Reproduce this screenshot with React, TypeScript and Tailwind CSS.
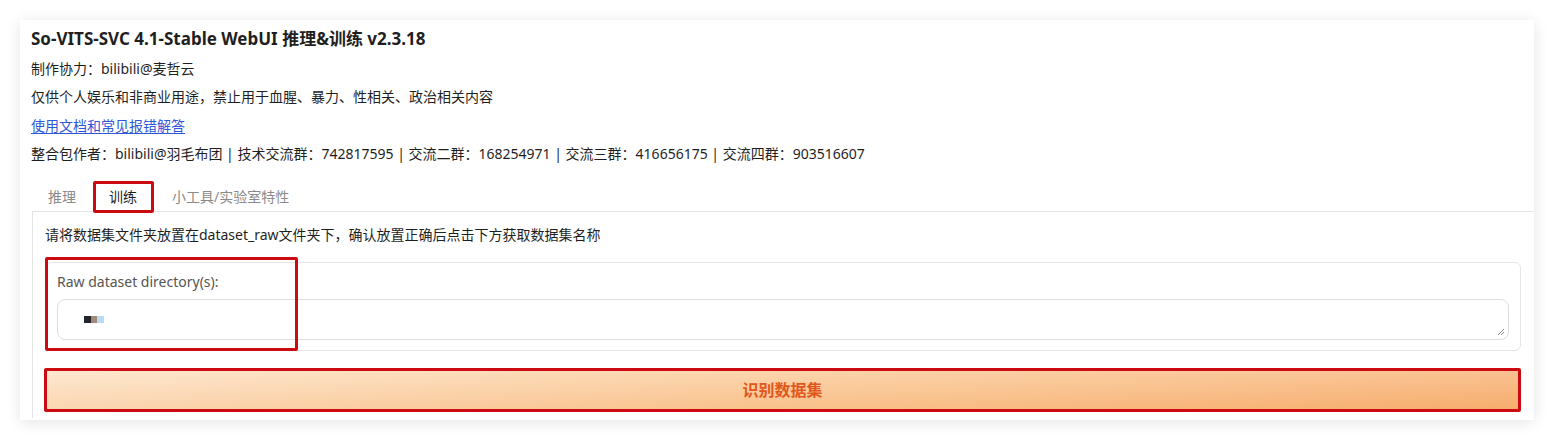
const infoLines = [
  "制作协力：bilibili@麦哲云",
  "仅供个人娱乐和非商业用途，禁止用于血腥、暴力、性相关、政治相关内容",
]

const App = () => {
  return (
    <div className="min-h-[440px] bg-white pt-5 pl-5 pr-5 font-['Noto_Sans','Noto_Sans_CJK_SC',sans-serif] text-[#1f1f1f]">
      {/* Card */}
      <div className="w-[1514px] h-[400px] bg-white shadow-[0_2px_14px_rgba(0,0,0,0.11)] pl-[11px] pt-[7px]">
        {/* Header */}
        <h1 className="h-[22px] flex items-center text-[17px] font-bold leading-none">
          So-VITS-SVC 4.1-Stable WebUI 推理&amp;训练 v2.3.18
        </h1>
        <div className="mt-[5px] text-[14px]">
          {infoLines.map((line, i) => (
            <div key={i} className="h-[28.5px] flex items-center">{line}</div>
          ))}
          <div className="h-[28.5px] flex items-center">
            <a href="#" className="text-[#2f57d6] underline underline-offset-2">使用文档和常见报错解答</a>
          </div>
          <div className="h-[28.5px] flex items-center">
            整合包作者：bilibili@羽毛布团 | 技术交流群：742817595 | 交流二群：168254971 | 交流三群：416656175 | 交流四群：903516607
          </div>
        </div>

        {/* Tabs */}
        <div className="mt-[14px] ml-px flex h-[29px] items-center text-[14px]">
          <div className="px-4 text-[#8a8a8a]">推理</div>
          <div className="relative ml-px px-4 h-full flex items-center text-[#1f1f1f]">
            训练
            <div className="absolute left-0 -top-px w-[61px] h-[32px] border-[3px] border-[#cc0a12] rounded-[2px]"></div>
          </div>
          <div className="ml-[3px] px-4 text-[#8a8a8a]">小工具/实验室特性</div>
        </div>

        {/* Tab panel */}
        <div className="ml-px h-[207px] border-l border-t border-[#e3e3e3] pl-3 pr-[13px] pt-3">
          <div className="h-5 flex items-center text-[14px]">
            请将数据集文件夹放置在dataset_raw文件夹下，确认放置正确后点击下方获取数据集名称
          </div>

          {/* Form block */}
          <div className="relative mt-[18px] h-[89px] border border-[#e5e5e5] rounded-md px-[11px] pt-[8px]">
            <div className="h-5 flex items-center text-[14px] text-[#555]">Raw dataset directory(s):</div>
            <div className="relative mt-2 h-[41px] border border-[#dedede] rounded-lg flex items-center pl-[26px]">
              <span className="w-[7px] h-[7px] bg-[#22252b]"></span>
              <span className="w-[6px] h-[7px] bg-[#a38a78]"></span>
              <span className="w-[7px] h-[7px] bg-[#b7dcf5]"></span>
              <svg className="absolute right-[3px] bottom-[3px]" width="8" height="8" viewBox="0 0 8 8">
                <path d="M7 1 L1 7 M7 4 L4 7" stroke="#777" strokeWidth="0.9" fill="none" />
              </svg>
            </div>
            <div className="absolute -left-px -top-[6px] w-[253px] h-[94px] border-[3px] border-[#cc0a12] rounded-[2px]"></div>
          </div>

          {/* Button */}
          <button className="mt-[17px] -ml-px w-[1477px] h-[44px] border-[3px] border-[#cc0a12] rounded-[2px] bg-[linear-gradient(180deg,rgba(255,255,255,0.18),rgba(235,120,30,0.12)),linear-gradient(90deg,#fde3c6,#fbcb9a_50%,#f8b478)] flex items-center justify-center text-[16px] font-bold text-[#e2561c]">
            识别数据集
          </button>
        </div>
      </div>
    </div>
  )
}

export default App
